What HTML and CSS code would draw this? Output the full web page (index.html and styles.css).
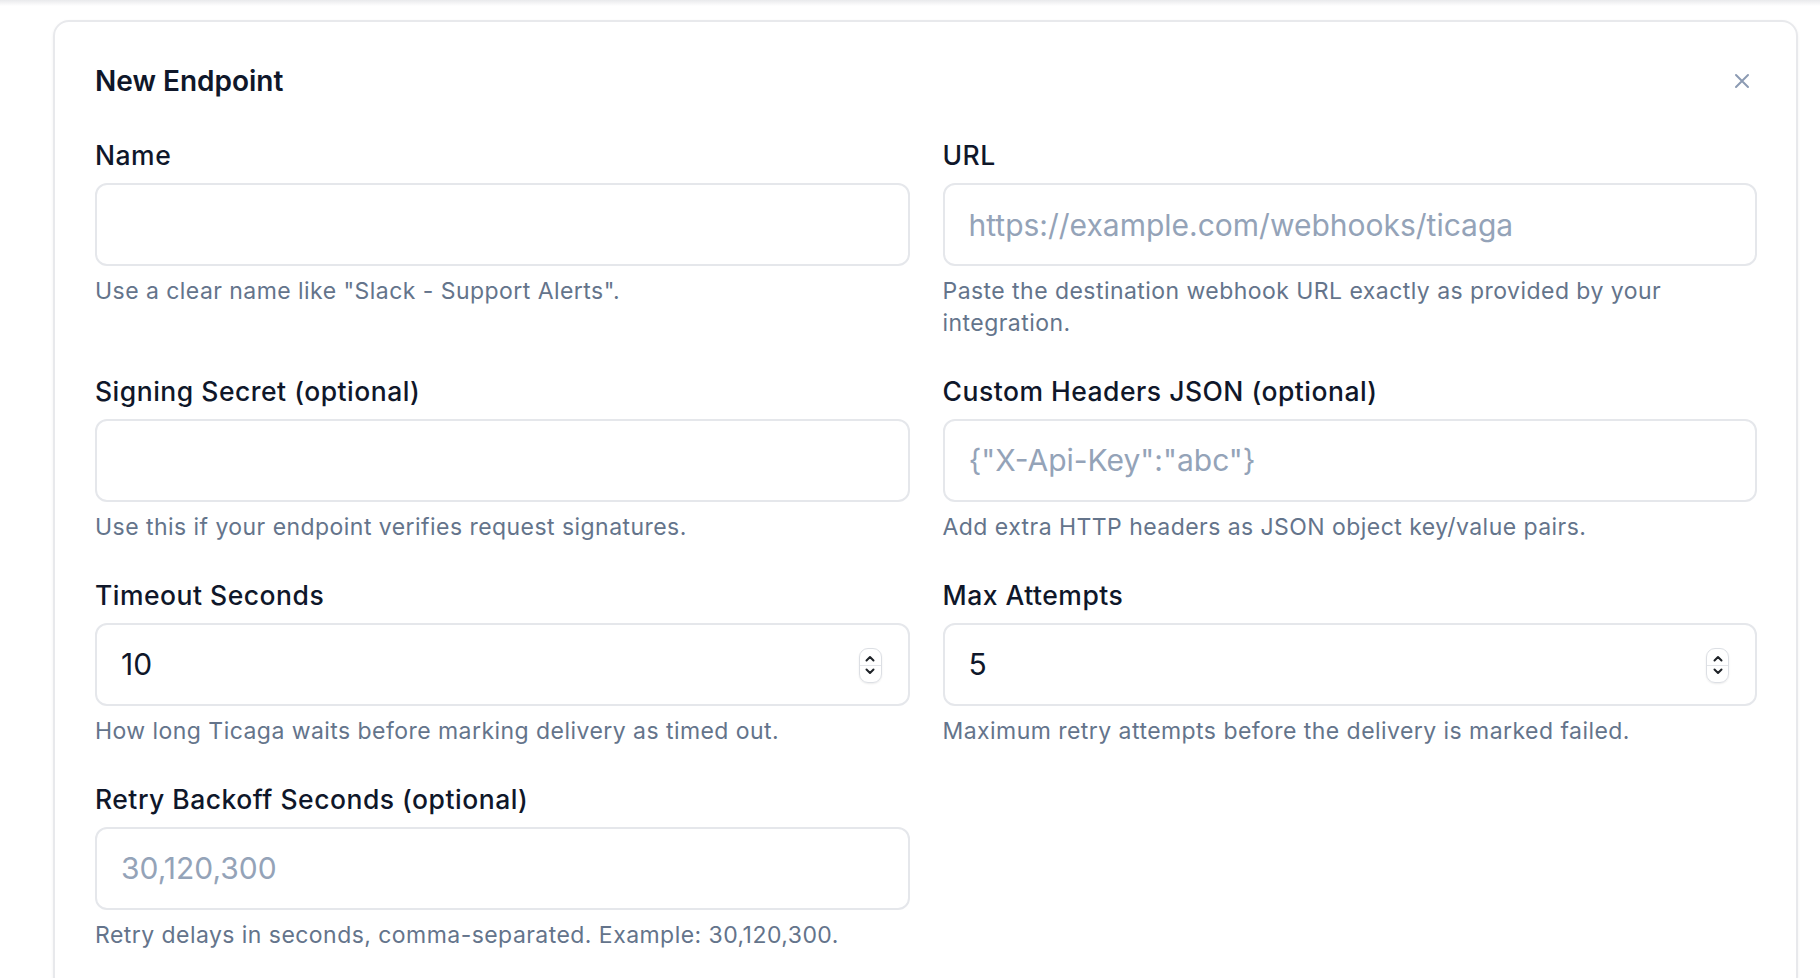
FILE: index.html
```html
<!DOCTYPE html>
<html lang="en">
<head>
  <meta charset="UTF-8">
  <title>New Endpoint</title>
  <link rel="stylesheet" href="styles.css">
</head>
<body>
  <div class="top-shade"></div>

  <div class="card">
    <div class="card-head">
      <h2>New Endpoint</h2>
      <button class="close" type="button" aria-label="Close">
        <svg width="16" height="16" viewBox="0 0 16 16" fill="none" stroke="currentColor" stroke-width="2" stroke-linecap="round">
          <path d="M2 2l12 12M14 2L2 14"/>
        </svg>
      </button>
    </div>

    <form class="grid">
      <div class="field">
        <label for="ep-name">Name</label>
        <input class="input" id="ep-name" type="text">
        <p class="help">Use a clear name like "Slack - Support Alerts".</p>
      </div>

      <div class="field">
        <label for="ep-url">URL</label>
        <input class="input" id="ep-url" type="text" placeholder="https://example.com/webhooks/ticaga">
        <p class="help">Paste the destination webhook URL exactly as provided by your integration.</p>
      </div>

      <div class="field">
        <label for="ep-secret">Signing Secret (optional)</label>
        <input class="input" id="ep-secret" type="text">
        <p class="help">Use this if your endpoint verifies request signatures.</p>
      </div>

      <div class="field">
        <label for="ep-headers">Custom Headers JSON (optional)</label>
        <input class="input" id="ep-headers" type="text" placeholder='{"X-Api-Key":"abc"}'>
        <p class="help">Add extra HTTP headers as JSON object key/value pairs.</p>
      </div>

      <div class="field">
        <label for="ep-timeout">Timeout Seconds</label>
        <div class="input number">
          <input id="ep-timeout" type="text" inputmode="numeric" value="10">
          <span class="spin">
            <svg width="10" height="7" viewBox="0 0 10 7" fill="none" stroke="currentColor" stroke-width="2" stroke-linecap="round" stroke-linejoin="round"><path d="M1.5 5.5L5 2l3.5 3.5"/></svg>
            <svg width="10" height="7" viewBox="0 0 10 7" fill="none" stroke="currentColor" stroke-width="2" stroke-linecap="round" stroke-linejoin="round"><path d="M1.5 1.5L5 5l3.5-3.5"/></svg>
          </span>
        </div>
        <p class="help">How long Ticaga waits before marking delivery as timed out.</p>
      </div>

      <div class="field">
        <label for="ep-attempts">Max Attempts</label>
        <div class="input number">
          <input id="ep-attempts" type="text" inputmode="numeric" value="5">
          <span class="spin">
            <svg width="10" height="7" viewBox="0 0 10 7" fill="none" stroke="currentColor" stroke-width="2" stroke-linecap="round" stroke-linejoin="round"><path d="M1.5 5.5L5 2l3.5 3.5"/></svg>
            <svg width="10" height="7" viewBox="0 0 10 7" fill="none" stroke="currentColor" stroke-width="2" stroke-linecap="round" stroke-linejoin="round"><path d="M1.5 1.5L5 5l3.5-3.5"/></svg>
          </span>
        </div>
        <p class="help">Maximum retry attempts before the delivery is marked failed.</p>
      </div>

      <div class="field">
        <label for="ep-backoff">Retry Backoff Seconds (optional)</label>
        <input class="input" id="ep-backoff" type="text" placeholder="30,120,300">
        <p class="help">Retry delays in seconds, comma-separated. Example: 30,120,300.</p>
      </div>
    </form>
  </div>
</body>
</html>
```

FILE: styles.css
```css
body {
  margin: 0;
  background: #fff;
  font-family: Inter, "Noto Sans", "Liberation Sans", sans-serif;
  color: #0f172a;
}

.top-shade {
  height: 6px;
  background: linear-gradient(to bottom, #e9eaec, #fff);
}

.card {
  margin: 14px 22px 0 53px;
  padding: 36px 39px 40px 40px;
  border: 2px solid #e8e9ec;
  border-radius: 16px;
  box-shadow: 0 1px 3px rgba(15, 23, 42, 0.06);
}

.card-head {
  display: flex;
  align-items: center;
  justify-content: space-between;
  margin-bottom: 31px;
}

.card-head h2 {
  margin: 0;
  font-size: 28px;
  line-height: 46px;
  font-weight: 600;
}

.close {
  width: 30px;
  height: 30px;
  padding: 0;
  border: 0;
  background: none;
  color: #8c9bb3;
  display: flex;
  align-items: center;
  justify-content: center;
  cursor: pointer;
}

.grid {
  display: grid;
  grid-template-columns: 1fr 1fr;
  gap: 31.5px 33px;
}

.field label {
  display: block;
  margin-bottom: 8px;
  font-size: 26.5px;
  line-height: 40px;
  font-weight: 500;
  letter-spacing: 0.5px;
}

.input {
  box-sizing: border-box;
  width: 100%;
  height: 83px;
  padding: 0 24px;
  border: 2px solid #e5e7eb;
  border-radius: 12px;
  background: #fff;
  font-family: inherit;
  font-size: 30px;
  color: #0f172a;
  outline: none;
}

.input::placeholder {
  color: #94a3b8;
}

.input.number {
  display: flex;
  align-items: center;
  padding-right: 26px;
}

.input.number input {
  flex: 1;
  min-width: 0;
  padding: 0;
  border: 0;
  background: none;
  font: inherit;
  color: inherit;
  outline: none;
}

.spin {
  width: 23px;
  height: 35px;
  margin-top: 2px;
  box-sizing: border-box;
  border: 1px solid #dcdfe4;
  border-radius: 9px;
  box-shadow: 0 1px 2px rgba(0, 0, 0, 0.08);
  display: flex;
  flex-direction: column;
  align-items: center;
  justify-content: space-evenly;
  color: #1f2328;
  background: linear-gradient(to bottom, #fff 48%, #e3e5e9 48%, #e3e5e9 52%, #fff 52%);
}

.help {
  margin: 10px 0 0;
  font-size: 23px;
  line-height: 31.5px;
  color: #64748b;
  letter-spacing: 0.45px;
}
```
